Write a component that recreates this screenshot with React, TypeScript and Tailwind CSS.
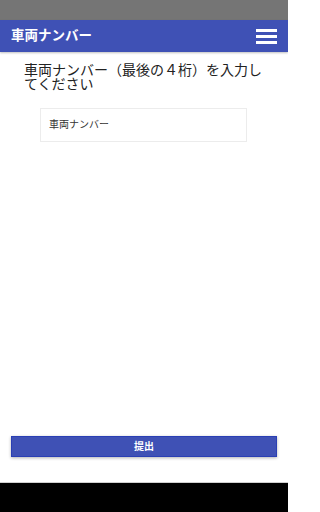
import React from "react";

export default function App() {
  const font = { fontFamily: '"Roboto", "Noto Sans CJK JP", sans-serif' };
  return (
    <div className="w-[288px] h-[512px] flex flex-col bg-white overflow-hidden" style={font}>
      <div className="h-[20px] bg-[#757575] shrink-0" />
      <div className="h-[32px] bg-[#3f51b5] shrink-0 flex items-center justify-between pl-[11px] pr-[11px] shadow-[0_1px_2px_rgba(0,0,0,0.25)] relative z-10">
        <span className="text-white font-bold text-[13.5px] leading-none">車両ナンバー</span>
        <div className="flex flex-col gap-[3px] w-[21px]">
          <div className="h-[3px] bg-white" />
          <div className="h-[3px] bg-white" />
          <div className="h-[3px] bg-white" />
        </div>
      </div>
      <div className="flex-1 flex flex-col">
        <p className="pt-[11px] pl-[24px] pr-[24px] text-[14px] leading-[14px] text-[#222]">
          車両ナンバー（最後の４桁）を入力してください
        </p>
        <div className="mt-[17px] ml-[40px] w-[207px] h-[34px] border border-[#ececec] flex items-center pl-[8px]">
          <span className="text-[10px] text-[#333] leading-none">車両ナンバー</span>
        </div>
        <div className="flex-1" />
        <button className="mx-[11px] mb-[25px] h-[21px] bg-[#3f51b5] border border-[#2a3fb4] shadow-[0_1px_3px_rgba(0,0,0,0.3)] text-white font-bold text-[10px] leading-none flex items-center justify-center">
          提出
        </button>
      </div>
      <div className="h-[1px] bg-[#d0d0d0] shrink-0" />
      <div className="h-[29px] bg-black shrink-0" />
    </div>
  );
}
